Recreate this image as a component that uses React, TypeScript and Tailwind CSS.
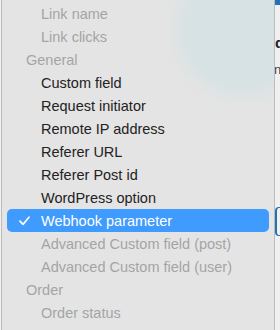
import React from 'react'

type Row = { label: string; kind: 'item' | 'disabled' | 'group'; checked?: boolean }

const ROWS: Row[] = [
  { label: 'Link name', kind: 'disabled' },
  { label: 'Link clicks', kind: 'disabled' },
  { label: 'General', kind: 'group' },
  { label: 'Custom field', kind: 'item' },
  { label: 'Request initiator', kind: 'item' },
  { label: 'Remote IP address', kind: 'item' },
  { label: 'Referer URL', kind: 'item' },
  { label: 'Referer Post id', kind: 'item' },
  { label: 'WordPress option', kind: 'item' },
  { label: 'Webhook parameter', kind: 'item', checked: true },
  { label: 'Advanced Custom field (post)', kind: 'disabled' },
  { label: 'Advanced Custom field (user)', kind: 'disabled' },
  { label: 'Order', kind: 'group' },
  { label: 'Order status', kind: 'disabled' },
]

function Check() {
  return (
    <svg width="11" height="10" viewBox="0 0 11 10" className="w-[11px] h-[10px]">
      <path d="M1 5.2 L4 8.4 L10 1.2" fill="none" stroke="#fff" strokeWidth="1.7" strokeLinecap="round" strokeLinejoin="round" />
    </svg>
  )
}

export default function App() {
  return (
    <div
      className="relative w-[280px] h-[330px] overflow-hidden bg-[#f0f0f1] flex"
      style={{ fontFamily: '"Liberation Sans", Arial, sans-serif' }}
    >
      {/* page behind the menu */}
      <div className="w-[274px] shrink-0" />
      <div className="flex-1 flex flex-col">
        <div className="h-[5px] bg-[#2271b1]" />
        <div className="mt-[30px] pl-px text-[15px] font-bold text-[#1d2327] leading-none whitespace-nowrap">d</div>
        <div className="mt-[13px] text-[13px] text-[#3c434a] leading-none whitespace-nowrap">ns</div>
        <div className="mt-[131px] ml-px h-[29px] rounded-l-[4px] border-l-2 border-y border-[#2271b1]" />
      </div>

      {/* popup menu */}
      <div className="absolute left-[1px] top-0 w-[274px] h-[340px] bg-[#e4e4e4] border-x border-[#bdbdbd] overflow-hidden">
        <div className="absolute left-[176px] top-[-34px] w-[128px] h-[128px] rounded-full bg-[#d6e2e3] blur-[8px]" />
        <div className="relative flex flex-col pt-[2px] text-[14.5px]">
          {ROWS.map(r => {
            if (r.checked) {
              return (
                <div key={r.label} className="h-[23px] mx-[5px] rounded-[5px] bg-[#3f9bfd] text-white flex items-center pt-[2px] whitespace-nowrap">
                  <div className="w-[34px] flex justify-center pl-[1px] -mt-[2px]">
                    <Check />
                  </div>
                  {r.label}
                </div>
              )
            }
            return (
              <div
                key={r.label}
                className={
                  'h-[23px] mx-[5px] flex items-center pt-[2px] whitespace-nowrap ' +
                  (r.kind === 'group'
                    ? 'pl-[19px] text-[#a4a4a4]'
                    : r.kind === 'disabled'
                      ? 'pl-[34px] text-[#a4a4a4]'
                      : 'pl-[34px] text-[#222]')
                }
              >
                {r.label}
              </div>
            )
          })}
        </div>
      </div>
    </div>
  )
}
